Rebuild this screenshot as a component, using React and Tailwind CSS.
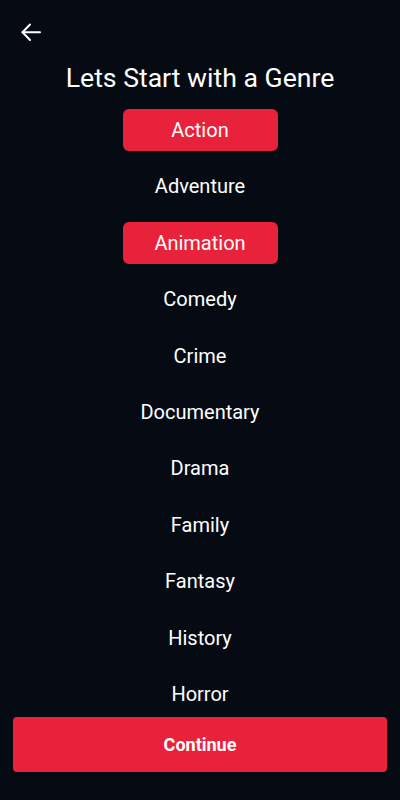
import React, { useState } from "react";

const GENRES = [
  "Action",
  "Adventure",
  "Animation",
  "Comedy",
  "Crime",
  "Documentary",
  "Drama",
  "Family",
  "Fantasy",
  "History",
  "Horror",
];

export default function App() {
  const [selected, setSelected] = useState(["Action", "Animation"]);
  const toggle = (g) =>
    setSelected((s) => (s.includes(g) ? s.filter((x) => x !== g) : [...s, g]));

  return (
    <div
      className="flex h-[800px] w-[400px] flex-col overflow-hidden bg-[#060b13] text-white"
      style={{ fontFamily: "Roboto, 'Noto Sans', sans-serif" }}
    >
      <div className="h-[56px] shrink-0 pl-[21px] pt-[23px]">
        <svg width="20" height="18" viewBox="0 0 20 18" fill="none" stroke="white" strokeWidth="2" strokeLinecap="round" strokeLinejoin="round">
          <path d="M1.5 9.3H19" />
          <path d="M9 1.5L1.5 9.3L9 17" />
        </svg>
      </div>
      <h1 className="mt-[6px] shrink-0 text-center text-[26.6px] leading-[32px] font-normal">
        Lets Start with a Genre
      </h1>
      <div className="mt-[15px] flex flex-1 flex-col items-center gap-[14.4px] overflow-hidden">
        {GENRES.map((g) => {
          const on = selected.includes(g);
          return (
            <button
              key={g}
              onClick={() => toggle(g)}
              className={
                "flex h-[42px] w-[155px] shrink-0 items-center justify-center rounded-[6px] text-[20px] " +
                (on ? "bg-[#e9223b]" : "bg-transparent")
              }
            >
              {g}
            </button>
          );
        })}
      </div>
      <button className="mx-[13px] mb-[28px] flex h-[55px] shrink-0 items-center justify-center rounded-[4px] bg-[#e9223b] text-[18px] font-bold">
        Continue
      </button>
    </div>
  );
}
